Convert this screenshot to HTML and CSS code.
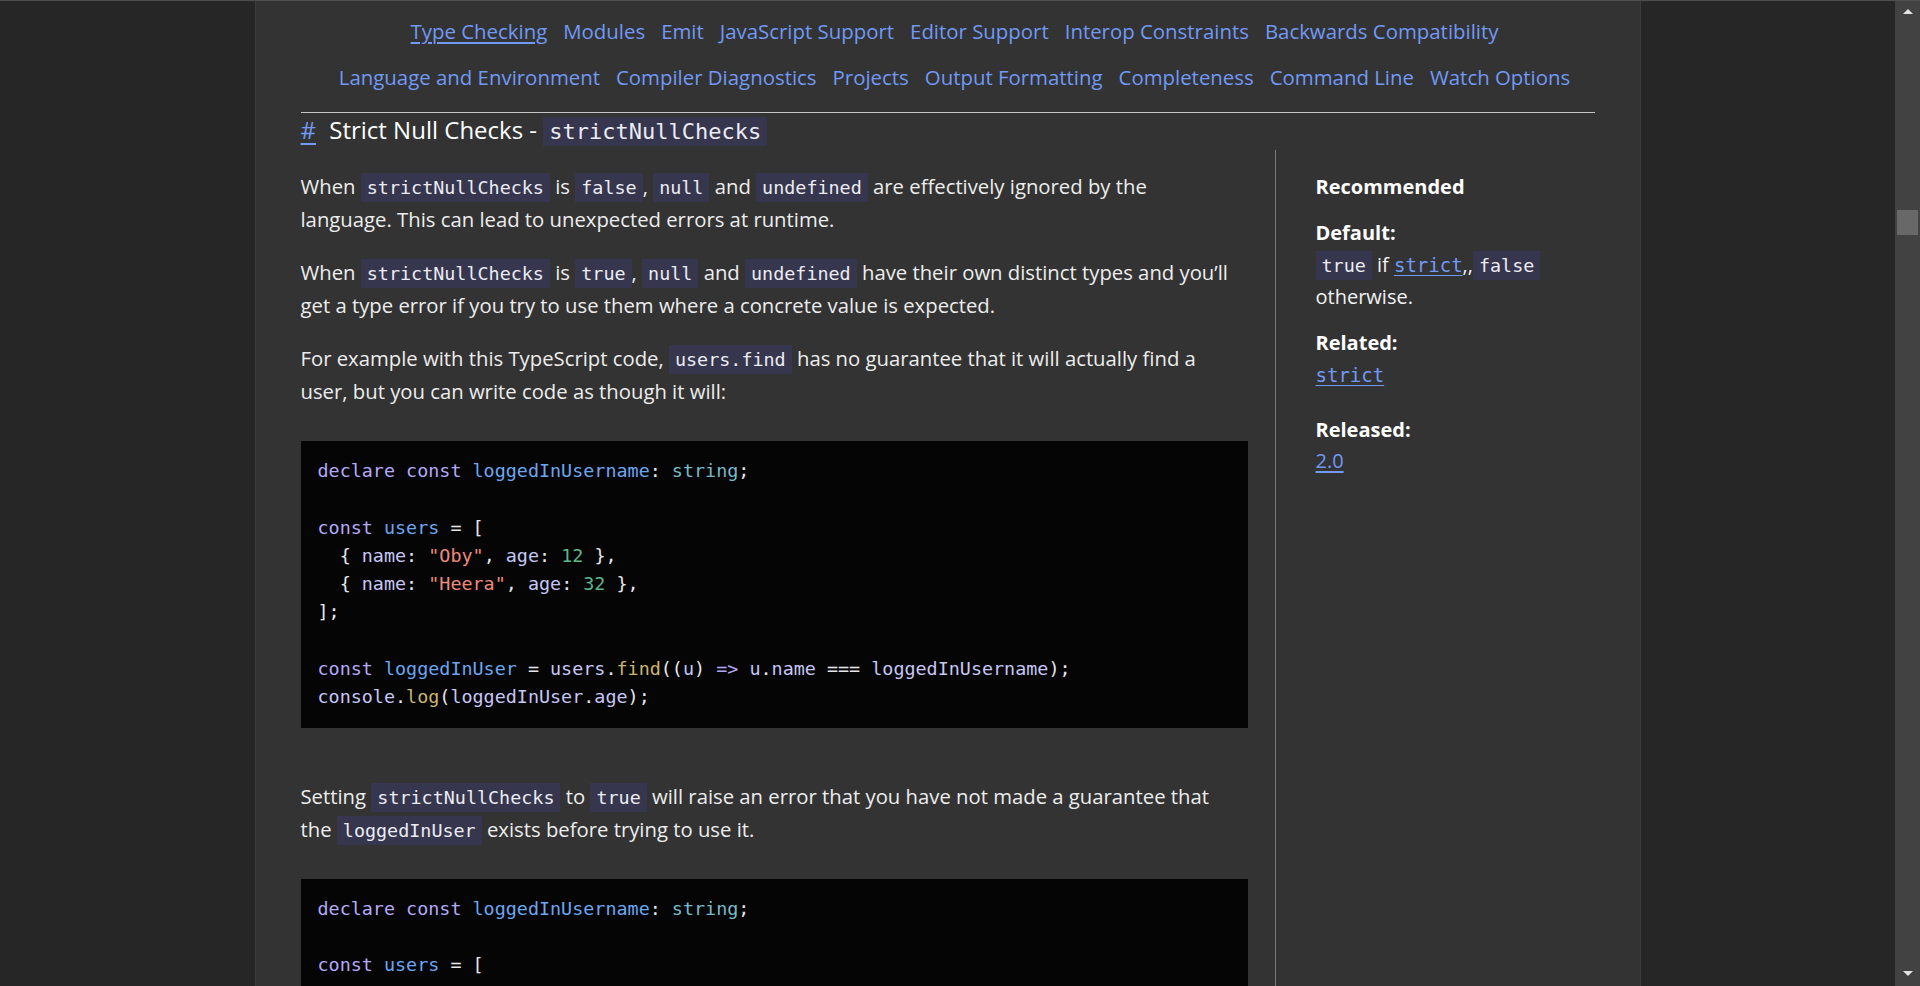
FILE: index.html
```html
<!DOCTYPE html>
<html lang="en">
<head>
<meta charset="utf-8">
<title>Strict Null Checks - strictNullChecks</title>
<link rel="stylesheet" href="styles.css">
</head>
<body>
<div class="topline"></div>
<div class="window">
  <div class="viewport">
    <div class="page">
      <nav class="nav">
        <div class="nav-row">
          <a class="active" href="#">Type Checking</a>
          <a href="#">Modules</a>
          <a href="#">Emit</a>
          <a href="#">JavaScript Support</a>
          <a href="#">Editor Support</a>
          <a href="#">Interop Constraints</a>
          <a href="#">Backwards Compatibility</a>
        </div>
        <div class="nav-row">
          <a href="#">Language and Environment</a>
          <a href="#">Compiler Diagnostics</a>
          <a href="#">Projects</a>
          <a href="#">Output Formatting</a>
          <a href="#">Completeness</a>
          <a href="#">Command Line</a>
          <a href="#">Watch Options</a>
        </div>
      </nav>

      <h2 class="title"><a class="anchor" href="#">#</a> Strict Null Checks - <code>strictNullChecks</code></h2>

      <div class="content">
        <div class="main">
          <p>When <code>strictNullChecks</code> is <code>false</code>, <code>null</code> and <code>undefined</code> are effectively ignored by the language. This can lead to unexpected errors at runtime.</p>
          <p>When <code>strictNullChecks</code> is <code>true</code>, <code>null</code> and <code>undefined</code> have their own distinct types and you’ll get a type error if you try to use them where a concrete value is expected.</p>
          <p>For example with this TypeScript code, <code>users.find</code> has no guarantee that it will actually find a user, but you can write code as though it will:</p>
<pre class="code"><span class="k">declare</span> <span class="k">const</span> <span class="v">loggedInUsername</span>: <span class="t">string</span>;

<span class="k">const</span> <span class="v">users</span> = [
  { <span class="p">name</span>: <span class="s">"Oby"</span>, <span class="p">age</span>: <span class="n">12</span> },
  { <span class="p">name</span>: <span class="s">"Heera"</span>, <span class="p">age</span>: <span class="n">32</span> },
];

<span class="k">const</span> <span class="v">loggedInUser</span> = <span class="p">users</span>.<span class="f">find</span>((<span class="p">u</span>) <span class="k">=&gt;</span> <span class="p">u</span>.<span class="p">name</span> === <span class="p">loggedInUsername</span>);
<span class="p">console</span>.<span class="f">log</span>(<span class="p">loggedInUser</span>.<span class="p">age</span>);</pre>
          <p>Setting <code>strictNullChecks</code> to <code>true</code> will raise an error that you have not made a guarantee that the <code>loggedInUser</code> exists before trying to use it.</p>
<pre class="code"><span class="k">declare</span> <span class="k">const</span> <span class="v">loggedInUsername</span>: <span class="t">string</span>;

<span class="k">const</span> <span class="v">users</span> = [
  { <span class="p">name</span>: <span class="s">"Oby"</span>, <span class="p">age</span>: <span class="n">12</span> },
  { <span class="p">name</span>: <span class="s">"Heera"</span>, <span class="p">age</span>: <span class="n">32</span> },
];

<span class="k">const</span> <span class="v">loggedInUser</span> = <span class="p">users</span>.<span class="f">find</span>((<span class="p">u</span>) <span class="k">=&gt;</span> <span class="p">u</span>.<span class="p">name</span> === <span class="p">loggedInUsername</span>);
<span class="p">console</span>.<span class="f">log</span>(<span class="p">loggedInUser</span>.<span class="p">age</span>);</pre>
        </div>

        <aside class="side">
          <div class="rec">Recommended</div>
          <div class="detail">
            <div class="label">Default:</div>
            <div class="value"><code>true</code> if <a class="codelink" href="#">strict</a>,,<code>false</code> otherwise.</div>
          </div>
          <div class="detail related">
            <div class="label">Related:</div>
            <div class="value"><a class="codelink" href="#">strict</a></div>
          </div>
          <div class="detail released">
            <div class="label">Released:</div>
            <div class="value"><a href="#">2.0</a></div>
          </div>
        </aside>
      </div>
    </div>
  </div>
  <div class="scrollbar">
    <div class="arrow-up"></div>
    <div class="thumb"></div>
    <div class="track-rest"></div>
    <div class="arrow-down"></div>
  </div>
</div>
</body>
</html>
```

FILE: styles.css
```css
* {
  box-sizing: border-box;
}

html,
body {
  margin: 0;
  height: 100%;
  overflow: hidden;
}

body {
  background: #262626;
  font-family: "Open Sans", sans-serif;
  color: #ededed;
  display: flex;
  flex-direction: column;
}

.topline {
  height: 1px;
  flex: none;
  background: #4f4f4f;
}

.window {
  flex: 1;
  display: flex;
  min-height: 0;
}

.viewport {
  flex: 1;
  display: flex;
  justify-content: center;
  overflow: hidden;
}

.page {
  width: 1386px;
  flex: none;
  background: #333333;
  border-left: 1px solid #3b3b3b;
  border-right: 1px solid #3b3b3b;
  padding: 0 45px;
}

/* navigation */
.nav {
  padding: 7px 0 12px;
  border-bottom: 1px solid #c6c6c6;
}

.nav-row {
  display: flex;
  justify-content: center;
  gap: 16px;
  padding-left: 14px;
  font-size: 20.4px;
  line-height: 46px;
}

.nav a {
  color: #7199f5;
  text-decoration: none;
}

.nav a.active {
  text-decoration: underline;
  text-underline-offset: 3px;
}

/* title */
.title {
  margin: 0;
  font-size: 24px;
  font-weight: 400;
  line-height: 34px;
  color: #ffffff;
}

.anchor {
  color: #7199f5;
  margin-right: 7px;
  text-underline-offset: 4px;
}

code {
  font-family: "DejaVu Sans Mono", monospace;
  font-size: 18.4px;
  line-height: 1;
  background: #36364f;
  color: #ececf2;
  padding: 4px 6px;
}

.title code {
  font-size: 22px;
  padding: 2px 6px;
}

/* content */
.content {
  display: flex;
  margin-top: 3px;
}

.main {
  width: 947px;
  flex: none;
  margin-right: 27px;
}

.main p {
  max-width: 936px;
  margin: 20px 0;
  font-size: 20.3px;
  line-height: 33px;
}

.code {
  margin: 33px 0 52px;
  background: #050505;
  padding: 16px 17px;
  font-family: "DejaVu Sans Mono", monospace;
  font-size: 18.4px;
  line-height: 28.3px;
  color: #e6e6ea;
  white-space: pre;
}

.code .k { color: #b4a9f7; }
.code .v { color: #6ca6f2; }
.code .t { color: #79b8c8; }
.code .s { color: #f08a7b; }
.code .n { color: #5bb88c; }
.code .f { color: #cdb46f; }
.code .p { color: #c6c7f5; }

/* sidebar */
.side {
  flex: 1;
  border-left: 1px solid #7a7a7a;
  padding: 21px 0 0 40px;
  font-size: 20px;
  line-height: 32px;
  color: #f2f2f2;
}

.rec,
.label {
  font-weight: 700;
  color: #ffffff;
}

.detail {
  margin-top: 14px;
}

.related {
  padding-bottom: 9px;
}

.released .value {
  line-height: 30px;
}

.side a {
  color: #7199f5;
  text-underline-offset: 3px;
}

.codelink {
  font-family: "DejaVu Sans Mono", monospace;
  font-size: 19px;
  line-height: 1;
}

/* fake scrollbar */
.scrollbar {
  width: 25px;
  flex: none;
  background: #424242;
  display: flex;
  flex-direction: column;
  align-items: center;
}

.arrow-up {
  margin-top: 8px;
  width: 0;
  height: 0;
  border-left: 5px solid transparent;
  border-right: 5px solid transparent;
  border-bottom: 5px solid #e4e4e4;
}

.thumb {
  margin-top: 196px;
  width: 21px;
  height: 25px;
  background: #686868;
}

.track-rest {
  flex: 1;
}

.arrow-down {
  margin-bottom: 10px;
  width: 0;
  height: 0;
  border-left: 5px solid transparent;
  border-right: 5px solid transparent;
  border-top: 5px solid #e4e4e4;
}
```
